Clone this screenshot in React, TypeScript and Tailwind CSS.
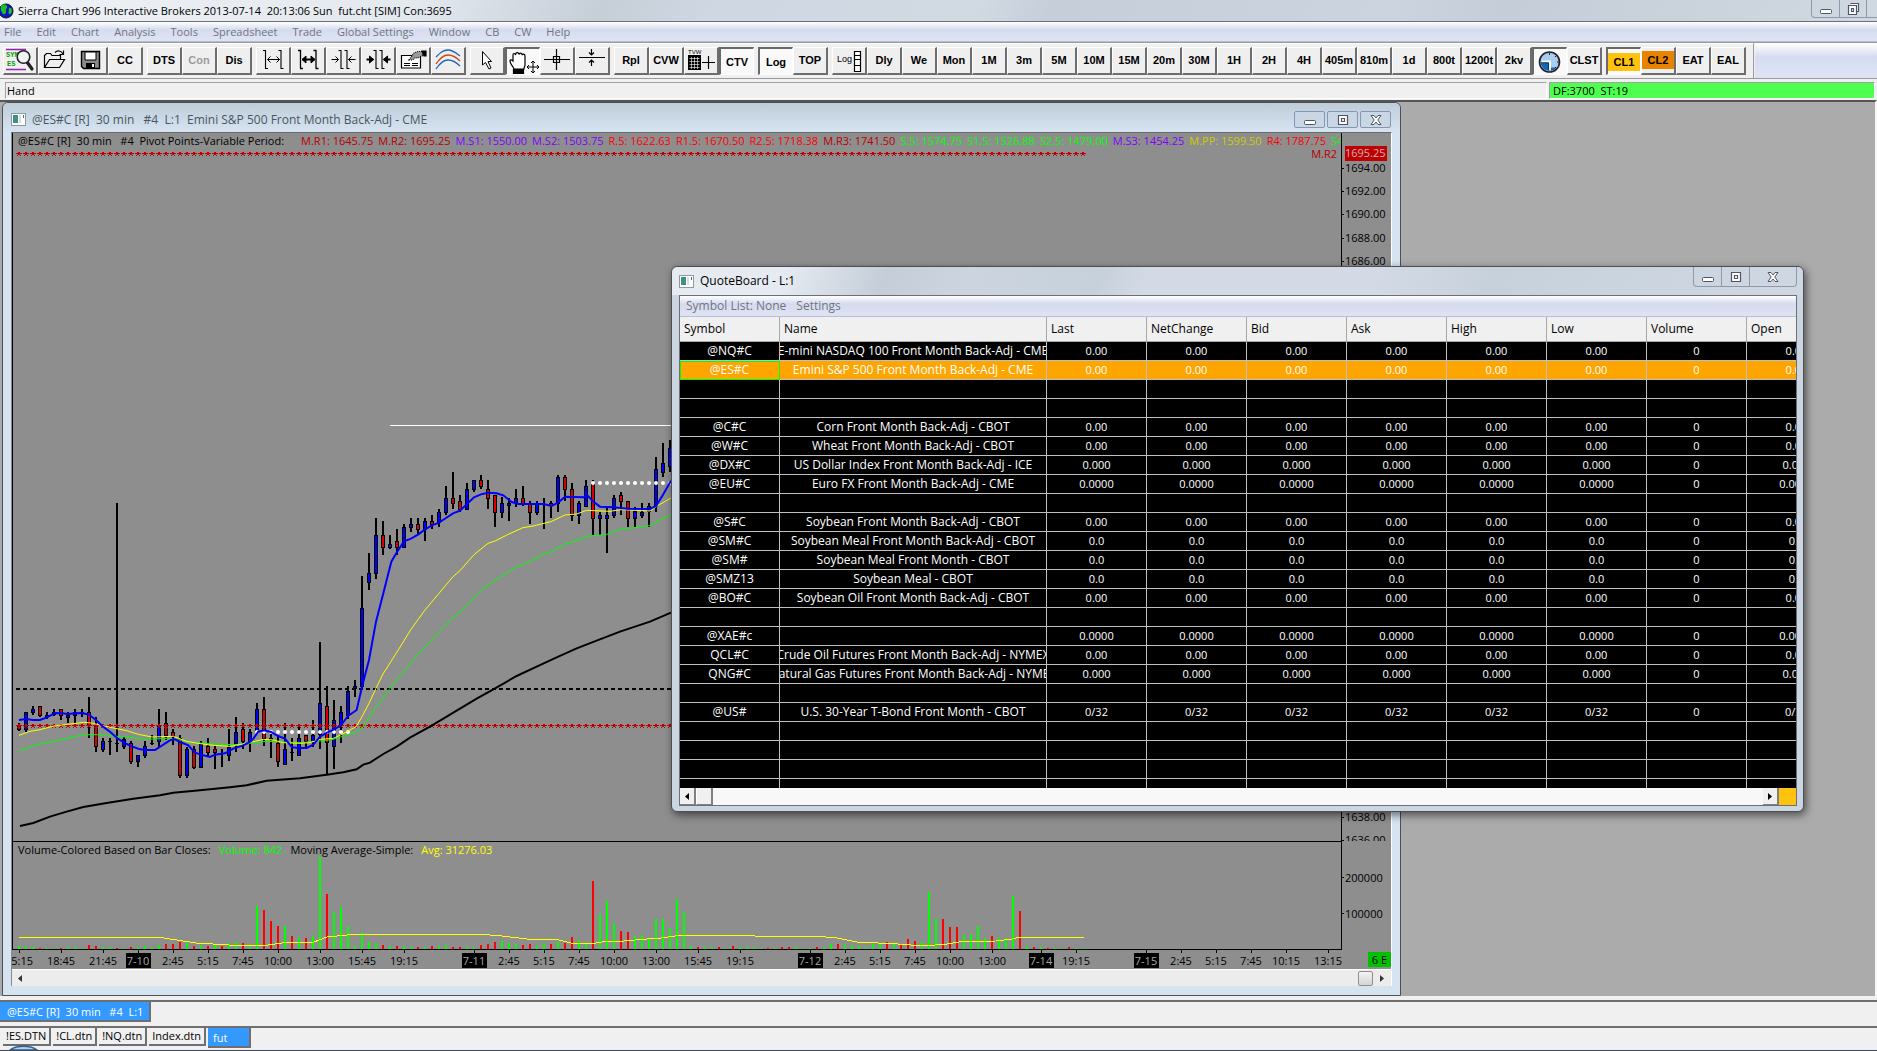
import React from "react";
import clsx from "clsx";

const MENU = ["File", "Edit", "Chart", "Analysis", "Tools", "Spreadsheet", "Trade", "Global Settings", "Window", "CB", "CW", "Help"];

type Tool = { label: string; icon?: React.ReactNode; pressed?: boolean; disabled?: boolean; fill?: string };

const arrowsOut = (bold: boolean) => (
  <g fill="none" stroke="#000" strokeWidth={1}>
    <path d="M7 4.5h2.5v18M9 22.5h3M22.5 4.5h2.5v18M24.5 22.5h3" strokeWidth={bold ? 1.3 : 1.1} />
    <path d="M11.5 13.5h12" strokeWidth={bold ? 2 : 1} />
    {bold ? <path d="M11 13.5l4-3.5v7zM24 13.5l-4-3.5v7z" fill="#000" /> : <path d="M14.5 10.5l-3 3 3 3M20.5 10.5l3 3-3 3" />}
  </g>
);

const arrowsIn = (bold: boolean) => (
  <g fill="none" stroke="#000" strokeWidth={1}>
    <path d="M12.5 4.5h2.5v18M14.5 22.5h3M18.5 4.5h2.5v18M20.5 22.5h3" strokeWidth={1.1} />
    <path d="M5.5 13.5h7M22.5 13.5h7" strokeWidth={bold ? 2 : 1} />
    {bold ? <path d="M12.5 13.5l-4-3.5v7zM22.5 13.5l4-3.5v7z" fill="#000" /> : <path d="M9.5 10.5l3 3-3 3M25.5 10.5l-3 3 3 3" />}
  </g>
);

const symbolIcon = (
  <g fill="none">
    <path d="M3 3.5h20M3 23.5h20" stroke="#9a1fb8" strokeWidth={1.4} />
    <text x="3" y="11" fontSize="7" fontWeight="700" fill="#0a9a0a" fontFamily="Liberation Mono">SYM</text>
    <text x="4" y="20" fontSize="7" fontWeight="700" fill="#0a9a0a" fontFamily="Liberation Mono">ES</text>
    <path d="M24 16l5 7" stroke="#222" strokeWidth={3.2} strokeLinecap="round" />
    <circle cx="20.5" cy="11" r="6.3" fill="#eef3f6" stroke="#222" strokeWidth={1.6} />
  </g>
);

const openIcon = (
  <g fill="none" stroke="#000" strokeWidth={1.2}>
    <path d="M6.5 21.5v-12l2-2h4l1.5 2h8.5v4M6.5 21.5l5-8h15l-5 8z" />
    <path d="M17 6.5c2.5-2.5 6-2 8 1.5M25.5 4.5v4h-4" />
  </g>
);

const saveIcon = (
  <g>
    <path d="M8.5 5.5h18v17h-16l-2-2z" fill="#8a8a8a" stroke="#000" strokeWidth={1.4} />
    <path d="M12 6h11v8H12z" fill="#fff" stroke="#000" />
    <path d="M13 17h9v5h-9z" fill="#000" />
    <path d="M19 18h2v3h-2z" fill="#fff" />
  </g>
);

const paramsIcon = (
  <g fill="none" stroke="#000" strokeWidth={1.2}>
    <path d="M5.5 9.5h19v12.5h-19z" fill="#fff" />
    <path d="M8 17.5h6M16 17.5h6M8 19.5h6M16 19.5h6" />
    <path d="M13 14l5-7 4-1.5h5v4l-4 2-4 .5-3 2z" fill="#9a9a9a" strokeDasharray="1 1" />
    <path d="M26 5h4v5h-2z" fill="#000" />
  </g>
);

const wavesIcon = (
  <g fill="none" strokeWidth={1.3}>
    <path d="M5 11c4-4 7-7 12-7s8 3 12 6" stroke="#1667bd" />
    <path d="M5 18c4-6 7-9 12-9s8 2 12 6" stroke="#d8400c" />
    <path d="M5 23c4-6 7-9 12-9s8 2 12 6" stroke="#1667bd" />
  </g>
);

const pointerIcon = <path d="M12.5 5.5v13.5l3-2.5 3.5 6.5 2-1-3-6.5h3.5z" fill="#fff" stroke="#000" />;

const handIcon = (
  <g fill="#fff" stroke="#000" strokeWidth={1.2}>
    <path d="M8 21c-1-3-4-5-4-8 0-2 2-1 3 0V7c0-2 2-2 2.5 0 0-3 3-3 3.5-.5.5-2 3-2 3 .5.5-1.5 3-1 3 1v9c0 1-1 2-1 4z" />
    <path d="M7.5 21.5h10v4h-10z" fill="#000" />
    <path d="M27 13v12M21 19h12M25 15l2-2 2 2M25 23l2 2 2-2M23 17l-2 2 2 2M31 17l2 2-2 2" fill="none" strokeWidth={1} />
  </g>
);

const crossIcon = <path d="M4 13.5h26M16.5 3v21M13.5 10.5h6v6h-6z" fill="none" stroke="#000" strokeWidth={1.2} />;

const linePointIcon = (
  <path d="M4 11.5h26M16.5 3v6M14 6.5l2.5 2.5 2.5-2.5M16.5 20v-6M14 16.5l2.5-2.5 2.5 2.5" fill="none" stroke="#000" strokeWidth={1.2} />
);

const tradeWindowIcon = (
  <g>
    <text x="4" y="8" fontSize="6" fontWeight="400" fontFamily="Liberation Sans">TVW</text>
    <path d="M4 9h13v15H4z" />
    <path d="M5.5 12.5h10M5.5 15.5h10M5.5 18.5h10M5.5 21.5h10M7.5 11v12M10.5 11v12M13.5 11v12" stroke="#fff" strokeWidth={0.6} />
    <path d="M18 16.5h13M24.5 10v13" stroke="#000" strokeWidth={1.2} />
  </g>
);

const logScaleIcon = (
  <g>
    <text x="5" y="16" fontSize="9" fontWeight="400" fontFamily="Liberation Sans">Log</text>
    <path d="M22.5 5.5h6v20h-6zM22.5 9.5h6M22.5 13.5h6M22.5 19.5h6" fill="#fff" stroke="#000" strokeWidth={1.2} />
  </g>
);

const clockIcon = (
  <g>
    <circle cx="16.5" cy="14" r="10" fill="#a9cdf2" stroke="#222" strokeWidth={1.6} />
    <path d="M7.5 14h9v9a9 9 0 0 1-9-9zM16.5 19.5h7a9 9 0 0 1-7 3.5z" fill="#1565b8" />
    <path d="M9 13.5h8v9" fill="none" stroke="#fff" strokeWidth={1.8} />
    <path d="M9 14.8h6.5v7" fill="none" stroke="#222" strokeWidth={0.8} />
    <path d="M16.5 5v2M24 14h2M22 9l1-1M22 19l1 1" stroke="#222" />
  </g>
);

const TOOLBAR: Tool[][] = [
  [{ label: "Find Symbol", icon: symbolIcon }, { label: "Open", icon: openIcon }, { label: "Save", icon: saveIcon }, { label: "CC" }],
  [{ label: "DTS" }, { label: "Con", disabled: true }, { label: "Dis" }],
  [
    { label: "Increase Bar Spacing", icon: arrowsOut(false) },
    { label: "Increase Bar Width", icon: arrowsOut(true) },
    { label: "Decrease Bar Spacing", icon: arrowsIn(false) },
    { label: "Decrease Bar Width", icon: arrowsIn(true) },
    { label: "Chart Settings", icon: paramsIcon },
    { label: "Studies", icon: wavesIcon },
  ],
  [
    { label: "Pointer", icon: pointerIcon },
    { label: "Hand", icon: handIcon, pressed: true },
    { label: "Chart Values", icon: crossIcon },
    { label: "Price Line", icon: linePointIcon },
  ],
  [{ label: "Rpl" }, { label: "CVW" }, { label: "Trade Window", icon: tradeWindowIcon }, { label: "CTV", pressed: true }],
  [{ label: "Log", pressed: true }, { label: "TOP" }],
  [
    { label: "Log Scale", icon: logScaleIcon },
    ...["Dly", "We", "Mon", "1M", "3m", "5M", "10M", "15M", "20m", "30M", "1H", "2H", "4H", "405m", "810m", "1d", "800t", "1200t", "2kv"].map((label) => ({ label })),
    { label: "Clock", icon: clockIcon, pressed: true },
    { label: "CLST" },
  ],
  [{ label: "CL1", pressed: true, fill: "bg-[#ffc20e]" }, { label: "CL2", fill: "bg-[#e88300]" }, { label: "EAT" }, { label: "EAL" }],
];

// [high, body top, body bottom, low, color], in thirds of a pixel
type Candle = [number, number, number, number, string];
const CANDLES: Candle[] = [
  [968, 976, 990, 994, "r"], [936, 936, 990, 996, "b"], [918, 927, 938, 944, "b"], [918, 918, 948, 951, "r"],
  [936, 945, 950, 957, "b"], [927, 937, 946, 948, "b"], [927, 928, 948, 960, "r"], [936, 944, 953, 968, "b"],
  [927, 935, 947, 970, "b"], [927, 936, 942, 950, "b"], [891, 936, 978, 1014, "r"], [950, 975, 1040, 1056, "r"],
  [1014, 1023, 1050, 1056, "b"], [1014, 1023, 1026, 1065, "k"], [309, 1028, 1032, 1056, "k"], [1012, 1016, 1040, 1046, "b"],
  [1023, 1030, 1086, 1092, "r"], [1065, 1065, 1086, 1101, "b"], [1023, 1038, 1068, 1074, "b"], [1005, 1030, 1033, 1036, "k"],
  [927, 975, 1025, 1040, "b"], [936, 970, 1008, 1020, "r"], [987, 996, 1010, 1036, "r"], [1005, 1015, 1128, 1134, "r"],
  [1040, 1047, 1128, 1134, "b"], [1038, 1046, 1104, 1107, "r"], [1023, 1032, 1104, 1104, "b"], [1014, 1038, 1058, 1070, "r"],
  [1038, 1047, 1058, 1107, "r"], [1047, 1060, 1063, 1101, "k"], [987, 1040, 1068, 1083, "b"], [951, 996, 1032, 1056, "b"],
  [969, 987, 1026, 1047, "r"], [987, 996, 1028, 1056, "b"], [909, 927, 996, 1002, "b"], [891, 927, 1016, 1038, "r"],
  [1000, 1014, 1020, 1074, "r"], [1005, 1028, 1086, 1101, "r"], [969, 1047, 1094, 1094, "b"], [1014, 1055, 1060, 1083, "k"],
  [978, 1014, 1068, 1068, "b"], [1005, 1005, 1026, 1045, "r"], [960, 1005, 1028, 1040, "b"], [726, 909, 1005, 1047, "b"],
  [858, 918, 1030, 1125, "r"], [900, 960, 1040, 1107, "b"], [918, 936, 975, 1028, "b"], [858, 873, 948, 958, "b"],
  [840, 858, 866, 890, "b"], [528, 625, 860, 870, "b"], [459, 519, 548, 570, "b"], [354, 405, 521, 537, "b"],
  [363, 405, 443, 464, "r"], [405, 432, 443, 448, "b"], [387, 423, 443, 464, "r"], [372, 381, 443, 443, "b"],
  [354, 372, 383, 395, "b"], [354, 372, 389, 404, "r"], [354, 363, 391, 422, "b"], [345, 363, 374, 386, "r"],
  [327, 336, 368, 380, "b"], [258, 294, 338, 345, "b"], [216, 294, 312, 326, "r"], [285, 303, 330, 335, "r"],
  [249, 267, 329, 329, "b"], [240, 240, 269, 275, "b"], [225, 240, 260, 266, "r"], [240, 267, 296, 327, "r"],
  [285, 285, 338, 380, "r"], [290, 309, 338, 353, "b"], [295, 309, 319, 362, "b"], [267, 294, 310, 320, "b"],
  [258, 294, 314, 318, "r"], [303, 312, 338, 371, "r"], [303, 310, 338, 344, "b"], [294, 312, 316, 386, "k"],
  [303, 309, 318, 353, "r"], [225, 231, 312, 335, "b"], [225, 231, 269, 302, "r"], [249, 267, 347, 362, "r"],
  [303, 309, 347, 371, "b"], [240, 258, 320, 320, "b"], [240, 249, 356, 404, "r"], [336, 345, 356, 404, "b"],
  [318, 345, 356, 458, "b"], [285, 294, 347, 353, "b"], [276, 285, 305, 344, "r"], [303, 303, 356, 380, "r"],
  [320, 333, 356, 380, "b"], [309, 337, 347, 353, "b"], [309, 318, 335, 380, "b"], [171, 207, 320, 335, "b"],
  [129, 189, 218, 230, "b"], [120, 145, 200, 215, "b"],
];

const FAST_MA = "57,960 78,957 99,960 120,960 141,952 165,939 186,940 204,942 225,940 246,939 267,944 288,960 309,980 330,995 351,1014 372,1028 393,1038 420,1048 441,1050 465,1050 490,1034 512,1020 525,1018 540,1026 565,1036 585,1058 610,1066 630,1071 645,1064 675,1060 700,1046 730,1036 750,1026 760,1016 775,995 792,991 813,996 834,1008 855,1016 876,1042 897,1044 920,1044 940,1034 960,1010 981,998 1002,988 1023,976 1044,948 1070,930 1086,860 1107,780 1128,665 1150,580 1174,485 1191,456 1212,424 1233,416 1254,404 1275,388 1296,376 1317,368 1338,354 1359,340 1380,332 1401,312 1422,292 1443,283 1464,278 1490,280 1510,286 1535,306 1555,312 1630,312 1655,318 1674,308 1695,290 1750,292 1762,286 1779,304 1800,320 1840,322 1884,326 1950,327 1968,318 1989,284 2013,242";
const MID_MA = "57,1006 90,994 120,989 162,978 204,973 250,967 275,969 300,975 340,984 380,992 415,1003 456,1011 520,1009 560,1024 600,1031 640,1036 690,1039 740,1030 790,1018 820,1020 850,1028 900,1030 930,1028 960,1018 1000,1015 1044,994 1070,978 1086,950 1107,910 1128,865 1149,822 1191,756 1233,688 1275,630 1317,580 1359,530 1380,512 1422,464 1464,430 1485,423 1527,402 1569,383 1600,378 1653,365 1695,345 1730,342 1760,331 1830,334 1863,329 1950,333 1975,316 2013,294";
const SLOW_MA = "57,1052 90,1041 120,1032 180,1020 250,1004 290,1004 340,1008 390,1012 440,1018 500,1015 540,1020 570,1027 640,1032 700,1034 750,1030 800,1024 900,1028 950,1024 1000,1018 1044,1004 1070,996 1086,984 1128,922 1170,865 1191,838 1233,788 1275,740 1317,696 1359,652 1390,628 1430,582 1464,555 1506,528 1548,502 1590,484 1630,462 1655,455 1695,432 1730,422 1760,409 1820,403 1863,388 1950,377 1980,360 2013,345";
const LONG_MA = "60,1278 100,1269 150,1250 200,1235 250,1221 320,1209 400,1196 480,1186 520,1178 600,1171 690,1162 740,1156 800,1142 900,1135 980,1124 1030,1117 1070,1108 1090,1094 1110,1088 1150,1062 1190,1040 1230,1013 1290,980 1350,944 1390,920 1430,896 1480,868 1550,828 1610,800 1670,772 1730,745 1790,722 1860,695 1950,665 2013,638";

// bar tops of the volume pane, in thirds of a pixel; g = up bar, r = down bar
const VOLUME =
  "g347 g348 g351 r354 g354 g354 r354 g351 g352 g354 r345 r348 g351 g352 r354 g354 r351 g351 g348 g351 g346 r342 r342 r336 g338 r348 g346 r348 g345 r348 g339 g336 r339 g345 g228 r240 r273 r288 g288 r318 g324 r324 g318 g82 r192 g246 g232 g288 g348 g306 g336 g340 r345 g348 r348 g348 g351 r351 g352 r348 g348 g346 r351 r351 g351 g351 r346 r342 r336 g334 g339 g342 r345 r342 g347 g340 r342 g336 r339 r321 g330 g339 r153 g252 g213 g280 r303 r306 g318 g316 g324 g267 g268 g294 g208 g246 g348 r351 g351 g352 r351 g354 r348 g351 g351 g351 g354 r354 g354 r351 r351 g352 g354 g354 r351 g351 g341 r342 g345 g346 g348 g351 g341 g341 r336 g342 r345 r327 r333 g336 g186 g264 r267 r291 r291 g316 g312 g288 g323 r318 g323 g323 g198 r243 g347 r351 g351 r354 g354 g354 r351 g354 g354".split(" ");

const VOLUME_AVG: [number, number][] = [
  [19, 320], [73, 322], [157, 322], [196, 340], [229, 346], [261, 349], [282, 340], [314, 337], [327, 322], [347, 316], [367, 313],
  [478, 313], [502, 318], [527, 326], [559, 329], [571, 339], [590, 343], [608, 334], [624, 332], [647, 328], [661, 325], [682, 316],
  [751, 316], [755, 319], [814, 319], [837, 323], [857, 336], [898, 341], [924, 349], [947, 342], [959, 337], [996, 333], [1012, 328],
  [1020, 322], [1074, 322], [1084, 325],
];

const TIMES: [number, string][] = [
  [19, "15:15"], [61, "18:45"], [103, "21:45"], [138, "7-10"], [173, "2:45"], [208, "5:15"], [243, "7:45"], [278, "10:00"],
  [320, "13:00"], [362, "15:45"], [404, "19:15"], [474, "7-11"], [509, "2:45"], [544, "5:15"], [579, "7:45"], [614, "10:00"],
  [656, "13:00"], [698, "15:45"], [740, "19:15"], [810, "7-12"], [845, "2:45"], [880, "5:15"], [915, "7:45"], [950, "10:00"],
  [992, "13:00"], [1041, "7-14"], [1076, "19:15"], [1146, "7-15"], [1181, "2:45"], [1216, "5:15"], [1251, "7:45"], [1286, "10:15"], [1328, "13:15"],
];

const STUDIES: [string, string][] = [
  ["M.R1: 1645.75", "text-[#b80000]"], ["M.R2: 1695.25", "text-[#b80000]"], ["M.S1: 1550.00", "text-[#8000ff]"],
  ["M.S2: 1503.75", "text-[#8000ff]"], ["R.5: 1622.63", "text-[#ff0000]"], ["R1.5: 1670.50", "text-[#ff0000]"],
  ["R2.5: 1718.38", "text-[#ff0000]"], ["M.R3: 1741.50", "text-[#b80000]"], ["S.5: 1574.75", "text-[#00ff00]"],
  ["S1.5: 1526.88", "text-[#00ff00]"], ["S2.5: 1479.00", "text-[#00ff00]"], ["M.S3: 1454.25", "text-[#8000ff]"],
  ["M.PP: 1599.50", "text-[#cccc00]"], ["R4: 1787.75", "text-[#ff0000]"], ["S4: 1409.75", "text-[#00ff00]"],
];

const COLUMNS = ["Symbol", "Name", "Last", "NetChange", "Bid", "Ask", "High", "Low", "Volume", "Open"];

type Quote = { symbol: string; name: string; value: string } | null;
const QUOTES: Quote[] = [
  { symbol: "@NQ#C", name: "E-mini NASDAQ 100 Front Month Back-Adj - CME", value: "0.00" },
  { symbol: "@ES#C", name: "Emini S&P 500 Front Month Back-Adj - CME", value: "0.00" },
  null,
  null,
  { symbol: "@C#C", name: "Corn Front Month Back-Adj - CBOT", value: "0.00" },
  { symbol: "@W#C", name: "Wheat Front Month Back-Adj - CBOT", value: "0.00" },
  { symbol: "@DX#C", name: "US Dollar Index Front Month Back-Adj - ICE", value: "0.000" },
  { symbol: "@EU#C", name: "Euro FX Front Month Back-Adj - CME", value: "0.0000" },
  null,
  { symbol: "@S#C", name: "Soybean Front Month Back-Adj - CBOT", value: "0.00" },
  { symbol: "@SM#C", name: "Soybean Meal Front Month Back-Adj - CBOT", value: "0.0" },
  { symbol: "@SM#", name: "Soybean Meal Front Month - CBOT", value: "0.0" },
  { symbol: "@SMZ13", name: "Soybean Meal - CBOT", value: "0.0" },
  { symbol: "@BO#C", name: "Soybean Oil Front Month Back-Adj - CBOT", value: "0.00" },
  null,
  { symbol: "@XAE#c", name: "", value: "0.0000" },
  { symbol: "QCL#C", name: "Crude Oil Futures Front Month Back-Adj - NYMEX", value: "0.00" },
  { symbol: "QNG#C", name: "Natural Gas Futures Front Month Back-Adj - NYMEX", value: "0.000" },
  null,
  { symbol: "@US#", name: "U.S. 30-Year T-Bond Front Month - CBOT", value: "0/32" },
  null,
  null,
  null,
  null,
];

function ToolButton({ tool }: { tool: Tool }) {
  return (
    <button
      aria-label={tool.label}
      disabled={tool.disabled}
      className={clsx(
        "flex h-7 w-[35px] items-center justify-center overflow-hidden border font-['Liberation_Sans',sans-serif] text-[11px] font-bold",
        tool.pressed
          ? "border-t-2 border-t-[#696969] border-l-2 border-l-[#696969] border-r-white border-b-white bg-[#f9f9f9]"
          : "border-t-white border-l-white border-r-2 border-r-[#6d6d6d] border-b-2 border-b-[#6d6d6d] bg-[#efefef] pb-0.5",
        tool.disabled && "text-[#9c9c9c]"
      )}
    >
      {tool.icon ? (
        <svg width="35" height="28" viewBox="0 0 35 28" className="shrink-0">{tool.icon}</svg>
      ) : (
        <span className={clsx("px-px", tool.fill && "w-full py-px text-center", tool.fill)}>{tool.label}</span>
      )}
    </button>
  );
}

function Glyph({ kind }: { kind: "min" | "max" | "restore" | "close" }) {
  return (
    <svg width="14" height="12" viewBox="0 0 14 12" fill="#fff" stroke="#4d5566">
      {kind === "min" && <rect x="1.5" y="6.5" width="11" height="4" rx="1" />}
      {kind === "max" && <path d="M2.5 1.5h9v9h-9zM5.5 4.5h3v3h-3z" strokeWidth={1.2} />}
      {kind === "restore" && <path d="M4.5.5h8v8h-2M2.5 2.5h8v9h-8zM5.5 5.5h2v3h-2z" strokeWidth={1.2} />}
      {kind === "close" && <path d="M2 1.5h3l2 2.5 2-2.5h3L8.8 6l3.2 4.5H9L7 8l-2 2.5H2L5.2 6z" />}
    </svg>
  );
}

function WindowIcon() {
  return (
    <svg width="15" height="13" viewBox="0 0 15 13">
      <rect x=".5" y=".5" width="14" height="12" fill="#fff" stroke="#8f989c" />
      <path d="M2 2h5v8H2z" fill="#3f8f86" />
      <path d="M8 2h2v8H8z" fill="#d7dde0" />
      <path d="M12 2h1v3h-1z" fill="#3b6fb0" />
    </svg>
  );
}

function PriceStudies() {
  const x = (i: number) => 6 + 7 * i;
  const y = (v: number) => 267 + Math.round(v / 3);
  const stars = (top: number, count: number) =>
    Array.from({ length: count }, (_, i) => `M${x(i) - 3} ${top}h6v1h-6zM${x(i) - 1} ${top - 1}h2v3h-2zM${x(i) - 2} ${top + 2}h1v1h-1zM${x(i) + 1} ${top + 2}h1v1h-1z`).join("");
  const dots = (v: number, from: number, to: number) =>
    Array.from({ length: to - from + 1 }, (_, k) => <circle key={k} cx={x(from + k)} cy={y(v)} r="2" fill="#fff" />);

  return (
    <svg className="absolute inset-0 h-full w-full">
      <path d={stars(20, 153)} fill="#c00000" shapeRendering="crispEdges" />
      <path d="M3 556h1400" stroke="#000" strokeWidth="2" strokeDasharray="4 3" shapeRendering="crispEdges" />
      <path d="M377 292h900v1h-900z" fill="#fff" shapeRendering="crispEdges" />
      <g shapeRendering="crispEdges">
        {CANDLES.map(([high, top, bottom, low, color], i) => (
          <g key={i}>
            <rect x={x(i) - 1} y={y(high)} width="2" height={Math.max(y(low) - y(high), 1)} />
            <rect x={x(i) - 2} y={y(top)} width="4" height={Math.max(y(bottom) - y(top), 1)} />
            {color !== "k" && (
              <rect x={x(i) - 1} y={y(top) + 1} width="2" height={Math.max(y(bottom) - y(top) - 2, 1)} fill={color === "r" ? "#d80000" : "#0000ff"} />
            )}
          </g>
        ))}
      </g>
      <path d={stars(592, 153)} fill="#c00000" shapeRendering="crispEdges" />
      {dots(996, 34, 47)}
      {dots(248, 82, 93)}
      <g transform="translate(-13 267) scale(0.33333)" fill="none">
        <polyline points={LONG_MA} stroke="#000" strokeWidth="6" />
        <polyline points={SLOW_MA} stroke="#00ff00" strokeWidth="3" />
        <polyline points={MID_MA} stroke="#ffff00" strokeWidth="3" />
        <polyline points={FAST_MA} stroke="#0000ff" strokeWidth="6" />
      </g>
    </svg>
  );
}

function PriceScale() {
  const prices = Array.from({ length: 30 }, (_, i) => 1694 - 2 * i);
  return (
    <svg className="h-full w-full text-[11px]">
      <rect x="3" y="13" width="42" height="15" fill="#c00000" />
      <text x="3" y="24" fill="#c8b4b4">1695.25</text>
      {prices.map((price, i) => {
        const py = Math.round(35 + i * 23.17);
        return (
          <g key={price}>
            <path d={`M0 ${py}h2v1h-2z`} />
            <text x="3" y={py + 4}>{price.toFixed(2)}</text>
          </g>
        );
      })}
    </svg>
  );
}

function VolumePane() {
  return (
    <svg className="absolute inset-0 h-full w-full" shapeRendering="crispEdges">
      {VOLUME.map((bar, i) => {
        const h = Math.round((357 - Number(bar.slice(1))) / 3);
        return <rect key={i} x={5 + 7 * i} y={107 - h} width="2" height={h} fill={bar[0] === "g" ? "#00ff00" : "#ff0000"} />;
      })}
      <polyline points={VOLUME_AVG.map(([px, v]) => `${px - 13},${Math.round(v / 3) - 12}`).join(" ")} fill="none" stroke="#ffff00" />
    </svg>
  );
}

function ChartWindow() {
  return (
    <section className="absolute inset-y-0 right-[474px] left-0.5 flex flex-col rounded-t-md border border-[#4b5056] bg-[#d6e4f1] px-2 pb-[9px]">
      <header className="-mx-2 flex h-[29px] shrink-0 items-center gap-1.5 rounded-t-md bg-linear-to-b from-[#bfcddb] to-[#d6e4f1] pt-1 pr-[9px] pl-2 text-[#4a5560]">
        <WindowIcon />
        <h2 className="grow text-xs whitespace-pre">@ES#C [R]  30 min   #4  L:1  Emini S&amp;P 500 Front Month Back-Adj - CME</h2>
        <div className="flex gap-0.5">
          {(["min", "max", "close"] as const).map((kind) => (
            <button key={kind} aria-label={kind} className="flex h-[17px] w-[31px] items-center justify-center rounded-xs border border-[#8796b0] bg-[#c9d6e4]">
              <Glyph kind={kind} />
            </button>
          ))}
        </div>
      </header>
      <div className="flex min-h-0 grow flex-col border-t border-r border-l border-t-[#6a6a6a] border-r-white border-l-[#8a8a8a] bg-[#8e8e8e]">
        <div className="grid min-h-0 grow grid-cols-[minmax(0,1fr)_49px] overflow-hidden border-l border-black">
          <div className="relative overflow-hidden border-r border-black">
            <PriceStudies />
            <p className="relative flex gap-[5px] pl-[5px] text-[11px] leading-4 whitespace-pre">
              <span className="pr-3">@ES#C [R]  30 min   #4  Pivot Points-Variable Period:</span>
              {STUDIES.map(([text, color]) => (
                <span key={text} className={color}>{text}</span>
              ))}
            </p>
            <p className="relative pr-1 text-right text-[11px] leading-[10px] text-[#b80000]">M.R2</p>
          </div>
          <PriceScale />
        </div>
        <div className="grid h-[109px] shrink-0 grid-cols-[minmax(0,1fr)_49px] border-l border-black">
          <div className="relative border-y border-r border-black">
            <VolumePane />
            <p className="relative flex gap-2 pl-[5px] text-[11px] leading-4 whitespace-pre">
              <span>Volume-Colored Based on Bar Closes:</span>
              <span className="text-[#00ff00]">Volume: 842</span>
              <span>Moving Average-Simple:</span>
              <span className="text-[#ffff00]">Avg: 31276.03</span>
            </p>
          </div>
          <svg className="h-full w-full text-[11px]">
            <path d="M0 36h2v1H0zM0 72h2v1H0z" />
            <text x="3" y="41">200000</text>
            <text x="3" y="77">100000</text>
          </svg>
        </div>
        <div className="flex h-[19px] shrink-0 items-center">
          <svg className="h-full grow text-[11px]">
            {TIMES.map(([px, label]) => {
              const date = label.startsWith("7-");
              return (
                <g key={px}>
                  <path d={`M${px - 12} 0h1v3h-1z`} />
                  {date && <rect x={px - 24} y="3" width="25" height="15" />}
                  <text x={px - 12} y="15" textAnchor="middle" fill={date ? "#a8a8a8" : "#000"}>{label}</text>
                </g>
              );
            })}
          </svg>
          <span className="bg-[#00c000] px-1 text-[11px] leading-[15px]">6 E</span>
        </div>
        <div className="flex h-[17px] shrink-0 items-center justify-between border-t border-white bg-[#ececec]">
          <button aria-label="Scroll left" className="px-1.5">
            <svg width="4" height="7"><path d="M4 0v7L0 3.5z" fill="#333" /></svg>
          </button>
          <div className="flex items-center">
            <span className="h-[15px] w-[15px] rounded-xs border border-[#8f8f8f] bg-linear-to-b from-[#f4f4f4] to-[#d4d4d4]" />
            <button aria-label="Scroll right" className="px-[7px]">
              <svg width="4" height="7"><path d="M0 0v7l4-3.5z" fill="#333" /></svg>
            </button>
          </div>
        </div>
      </div>
    </section>
  );
}

function QuoteRow({ quote, selected }: { quote: Quote; selected: boolean }) {
  const cells = quote
    ? [quote.symbol, quote.name, ...Array(6).fill(quote.value), "0", quote.value]
    : Array(COLUMNS.length).fill("");
  return (
    <tr className={clsx("h-[19px]", selected && "bg-[#ffa500]")}>
      {cells.map((cell, i) => (
        <td key={i} className={clsx("border-r border-b border-[#c0c0c0] p-0", selected && i === 0 && "outline -outline-offset-1 outline-[#00ff00]")}>
          <div className={clsx("flex h-[18px] items-center justify-center overflow-hidden whitespace-nowrap", i < 2 && "text-xs")}>{cell}</div>
        </td>
      ))}
    </tr>
  );
}

function QuoteBoard() {
  return (
    <section className="absolute top-[164px] left-[671px] flex h-[546px] w-[1133px] flex-col rounded-md border border-[#4b5056] bg-[#ccd6e1] pr-1.5 pb-[5px] pl-[7px] text-[11px] shadow-[2px_3px_9px_rgba(0,0,0,0.55)]">
      <header className="-mr-1.5 -ml-[7px] flex h-7 shrink-0 items-start rounded-t-md bg-[linear-gradient(110deg,#e6ebf1_0%,#e6ebf1_10%,#c4cdd8_19%,#ccd5df_26%,#c7d1db_38%,#d3dae5_42%,#d3dae5_62%,#c7d1dc_72%,#cfd8e2_100%)] pr-1.5 pl-[7px]">
        <div className="flex grow items-center gap-1.5 pt-1.5">
          <WindowIcon />
          <h2 className="text-xs">QuoteBoard - L:1</h2>
        </div>
        <div className="flex h-5 divide-x divide-[#8f99a8] rounded-b-sm border border-t-0 border-[#8f99a8]">
          <button aria-label="Minimize" className="flex w-7 items-center justify-center"><Glyph kind="min" /></button>
          <button aria-label="Maximize" className="flex w-7 items-center justify-center"><Glyph kind="max" /></button>
          <button aria-label="Close" className="flex w-[46px] items-center justify-center"><Glyph kind="close" /></button>
        </div>
      </header>
      <div className="flex min-h-0 grow flex-col border border-[#6b7078] bg-black">
        <nav className="flex h-[21px] shrink-0 items-center gap-2.5 border-b border-[#b9bfd4] bg-linear-to-b from-white via-[#d5dbee] via-40% to-[#dfe4f5] px-1.5 text-xs text-[#70757d]">
          <button>Symbol List: None</button>
          <button>Settings</button>
        </nav>
        <div className="min-h-0 grow overflow-hidden">
          <table className="w-[1167px] table-fixed border-separate border-spacing-0 text-white">
            <colgroup>
              <col className="w-[100px]" />
              <col className="w-[267px]" />
              {COLUMNS.slice(2).map((column) => (
                <col key={column} className="w-[100px]" />
              ))}
            </colgroup>
            <thead>
              <tr className="h-[25px] bg-[#f0f0f0] text-left text-xs text-black">
                {COLUMNS.map((column) => (
                  <th key={column} className="border-r border-b border-[#a8a8a8] px-1 py-0 font-normal">{column}</th>
                ))}
              </tr>
            </thead>
            <tbody>
              {QUOTES.map((quote, i) => (
                <QuoteRow key={i} quote={quote} selected={i === 1} />
              ))}
            </tbody>
          </table>
        </div>
        <div className="flex h-[17px] shrink-0 bg-[#f8f8f8]">
          <button aria-label="Scroll left" className="flex w-4 items-center justify-center border-r-2 border-b border-[#808080] bg-[#f0f0f0]">
            <svg width="4" height="7"><path d="M4 0v7L0 3.5z" /></svg>
          </button>
          <span className="w-[17px] border-r-2 border-b border-l border-[#808080] border-l-white bg-[#f0f0f0]" />
          <span className="grow" />
          <button aria-label="Scroll right" className="flex w-4 items-center justify-center border-r-2 border-b border-[#808080] bg-[#f0f0f0]">
            <svg width="4" height="7"><path d="M0 0v7l4-3.5z" /></svg>
          </button>
          <span className="w-[17px] bg-[#ffc20e]" />
        </div>
      </div>
    </section>
  );
}

export default function App() {
  return (
    <div className="flex h-screen flex-col overflow-hidden bg-[#f0f0f0] font-['Open_Sans',sans-serif] text-[11px] leading-4 text-black">
      <header className="flex h-[22px] shrink-0 items-start border-b border-[#6a7078] bg-[linear-gradient(115deg,#eef1f5_0%,#e4e9ef_22%,#c6ced8_32%,#cfd8e2_38%,#d1d9e3_52%,#c6cfd9_56%,#ccd5df_74%,#c5ced8_80%,#d0d8e1_100%)]">
        <svg width="14" height="20" viewBox="0 0 14 20">
          <circle cx="6" cy="11" r="7" fill="#0a14c8" stroke="#111" />
          <path d="M1 6c2-2 5-2 6 0s-2 3-1 5-2 4-3 3-3-5-2-8zM9 8c2-1 3 1 3 3s-2 4-3 3 0-4 0-6z" fill="#19c21c" />
        </svg>
        <h1 className="grow pt-[3px] pl-1 text-[11px] whitespace-pre">Sierra Chart 996 Interactive Brokers 2013-07-14  20:13:06 Sun  fut.cht [SIM] Con:3695</h1>
        <div className="flex h-[18px] divide-x divide-[#8f99a8] rounded-bl-sm border-b border-l border-[#8f99a8]">
          <button aria-label="Minimize" className="flex w-7 items-center justify-center"><Glyph kind="min" /></button>
          <button aria-label="Restore" className="flex w-[27px] items-center justify-center"><Glyph kind="restore" /></button>
          <span className="w-2.5" />
        </div>
      </header>
      <nav className="flex h-5 shrink-0 items-center gap-[15px] border-b border-[#b7bdd3] bg-linear-to-b from-white via-[#d6dcef] via-40% to-[#dfe4f5] px-1 text-[#70757d]">
        {MENU.map((item) => (
          <button key={item}>{item}</button>
        ))}
      </nav>
      <div className="flex h-[37px] shrink-0 items-stretch border-y border-[#9a9a9a]">
        <div className="flex items-center gap-1 border-t border-r border-t-white border-r-[#9a9a9a] pr-[7px] pl-[3px]">
          {TOOLBAR.map((group, g) => (
            <div key={g} className="flex">
              {group.map((tool) => (
                <ToolButton key={tool.label} tool={tool} />
              ))}
            </div>
          ))}
        </div>
        <div className="ml-px grow bg-linear-to-b from-white via-[#d6dcef] via-40% to-[#dfe4f5]" />
      </div>
      <div className="flex h-[21px] shrink-0 gap-0.5 pt-[3px] pr-0.5 pb-px pl-[5px]">
        <div className="grow border border-[#a0a0a0] border-r-white border-b-white px-px">Hand</div>
        <div className="w-[326px] border border-[#a0a0a0] border-r-white border-b-white bg-[#4fff4f] pl-[3px] whitespace-pre">DF:3700  ST:19</div>
      </div>
      <main className="relative min-h-0 grow overflow-hidden border-t-2 border-r-2 border-t-[#555] border-r-[#f6f6f6] bg-[#ababab]">
        <ChartWindow />
        <QuoteBoard />
      </main>
      <div className="h-[30px] shrink-0 pt-1">
        <div className="flex border-t-2 border-[#6f6f6f]">
          <button className="h-5 w-[151px] border-r-2 border-b-2 border-[#6f6f6f] bg-[#3399ff] pt-0.5 pl-[7px] text-left whitespace-pre text-white">@ES#C [R]  30 min   #4  L:1</button>
        </div>
      </div>
      <footer className="relative flex h-[25px] shrink-0 items-start gap-0.5 border-t-2 border-b border-t-[#6f6f6f] border-b-[#3f4b5e] pl-[3px]">
        {["!ES.DTN", "!CL.dtn", "!NQ.dtn", "Index.dtn"].map((tab) => (
          <button key={tab} className="h-[18px] border-r-2 border-b-2 border-[#6f6f6f] px-[3px]">{tab}</button>
        ))}
        <button className="h-5 w-[43px] border-r-2 border-b-2 border-[#6f6f6f] bg-[#3399ff] pt-0.5 pl-[5px] text-left text-white">fut</button>
        <svg width="30" height="6" className="absolute bottom-0 left-[9px]">
          <path d="M1 6C7 1 22 1 28 6z" fill="#b9cfe2" stroke="#2f5f8f" strokeWidth="1.5" />
        </svg>
      </footer>
    </div>
  );
}
